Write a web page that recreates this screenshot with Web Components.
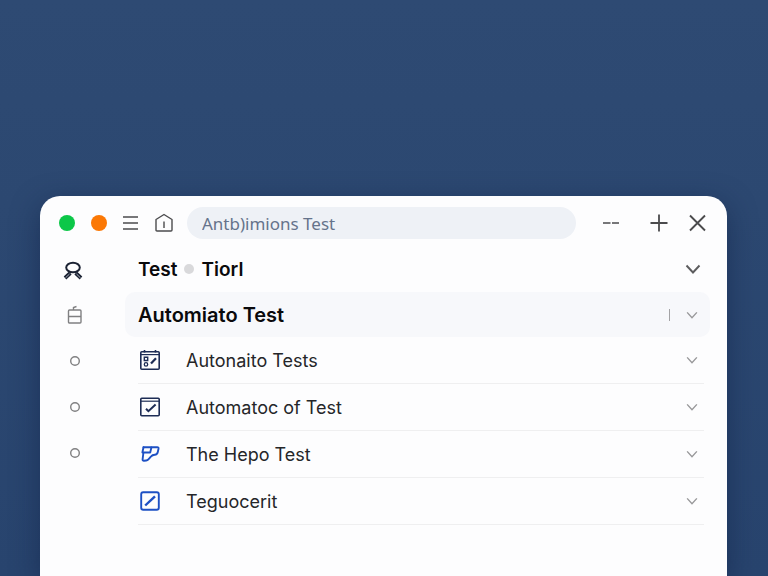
<!DOCTYPE html>
<html lang="en">
<head>
<meta charset="utf-8">
<meta name="viewport" content="width=device-width, initial-scale=1">
<title>Automiato Test</title>
<style>
  :root {
    --ink: #0a0a0c;
    --text: #252629;
    --grey: #808082;
    --dark-grey: #4b4b4d;
    --field: #eef1f6;
    --selected: #f7f8fb;
    --line: #efeff0;
    --navy: #1d2c55;
    --blue: #1d50c4;
  }

  body {
    margin: 0;
    min-height: 100vh;
    background: linear-gradient(#2e4a73, #2c4871 35%, #28446e);
    font-family: Inter, "Liberation Sans", sans-serif;
    color: var(--text);
    overflow: hidden;
  }
</style>
</head>
<body>
<app-window>
  <title-bar slot="bar" query="Antb)imions Test"></title-bar>
  <side-nav slot="nav"></side-nav>
  <section-head first="Test" second="Tiorl"></section-head>
  <group-row label="Automiato Test"></group-row>
  <test-row icon="list" label="Autonaito Tests"></test-row>
  <test-row icon="check" label="Automatoc of Test"></test-row>
  <test-row icon="flag" label="The Hepo Test"></test-row>
  <test-row icon="edit" label="Teguocerit"></test-row>
</app-window>

<script>
const base = `
  :host, * { box-sizing: border-box; margin: 0; padding: 0; }
  svg { display: block; fill: none; stroke: currentColor; }
  button { font: inherit; color: inherit; background: none; border: none; cursor: pointer; }
`;

const chevron = (size) => `
  <svg width="${size}" height="${size}" viewBox="0 0 16 16" stroke-width="1.9">
    <path d="M1.5 4.5 8 11.500l6.500-7"/>
  </svg>`;

const rowIcons = {
  list: `<g stroke="var(--navy)" stroke-width="1.6">
    <rect x="1.8" y="2.8" width="18.4" height="17.4" rx="1"/>
    <path d="M2 5.6h18" stroke-width="1.2"/>
    <path d="M5.5 1v2.5M16.5 1v2.5"/>
    <path d="M5.3 8.3h3.4v3.2H5.3z" stroke-width="1.4"/>
    <circle cx="7" cy="15.4" r="1.7" stroke-width="1.3"/>
    <path d="m12 14.6 5-5.4" stroke-width="2.2"/></g>`,
  check: `<g stroke="var(--navy)" stroke-width="1.6">
    <rect x="1.8" y="2.2" width="18.4" height="17.6" rx="1"/>
    <path d="M2 5.2h18" stroke-width="1.2"/>
    <path d="m7 12.8 2.4 2.4 7.200-6.700" stroke-width="2"/></g>`,
  flag: `<g stroke="var(--blue)" stroke-width="1.9" stroke-linejoin="round" stroke-linecap="round">
    <path d="M4.500 4.200h13.700q1.600 0 1.300 1.600l-.7 3.200q-.6 2.500-3 2.700-2.500.2-3.700 1.600l-2.700 3q-.9 1-2.200 1.200l-2.200.3q-1.600.1-1.400-1.500l.7-5.800"/>
    <path d="M4.500 4.200 3.400 9.500h7.800l1.200-5"/></g>`,
  edit: `<g stroke="var(--blue)" stroke-width="1.9">
    <rect x="2.2" y="2.2" width="17.6" height="17.6" rx="2"/>
    <path d="M6.200 15.500 16 6.300" stroke-width="2.4"/></g>`,
};

class AppWindow extends HTMLElement {
  constructor() {
    super();
    this.attachShadow({ mode: "open" });
    this.shadowRoot.innerHTML = `
      <style>
        ${base}
        :host { display: block; padding: 196px 41px 0 40px; }
        .window {
          min-height: calc(100vh - 196px);
          background: #fdfdfe;
          border-radius: 20px 20px 0 0;
          box-shadow: 0 8px 28px rgba(14, 30, 66, 0.5);
        }
        .body { display: grid; grid-template-columns: 85px minmax(0, 1fr); padding-right: 17px; }
      </style>
      <div class="window">
        <slot name="bar"></slot>
        <div class="body">
          <slot name="nav"></slot>
          <main><slot></slot></main>
        </div>
      </div>`;
  }
}

class TitleBar extends HTMLElement {
  constructor() {
    super();
    this.attachShadow({ mode: "open" });
    this.shadowRoot.innerHTML = `
      <style>
        ${base}
        :host {
          display: flex;
          align-items: center;
          height: 54px;
          padding: 0 20px 0 19px;
          color: var(--dark-grey);
        }
        .dot { width: 16px; height: 16px; margin-right: 16px; border-radius: 50%; }
        .green { background: #0cc748; }
        .orange { background: #fb7805; }
        .tool { margin-right: 14px; }
        input {
          flex: 1;
          min-width: 0;
          height: 32px;
          padding: 0 15px;
          border: none;
          border-radius: 16px;
          outline: none;
          background: var(--field);
          color: #65738b;
          font: 17px "Noto Sans", sans-serif;
        }
        .controls { display: flex; align-items: center; margin-left: 25px; }
        .max { margin: 0 18px 0 28px; }
      </style>
      <button class="dot green" aria-label="Run"></button>
      <button class="dot orange" aria-label="Pause"></button>
      <button class="tool" aria-label="Menu">
        <svg width="18" height="18" viewBox="0 0 18 18" stroke-width="1.4">
          <path d="M0 3h15M0 9h15M0 15h15"/>
        </svg>
      </button>
      <button class="tool" aria-label="Home">
        <svg width="18" height="20" viewBox="0 0 18 20" stroke-width="1.4" stroke-linejoin="round">
          <path d="M1 6.500 9 1.500l8 5V17q0 1-1 1H2q-1 0-1-1zM9 8.500V15"/>
        </svg>
      </button>
      <input type="text" aria-label="Search">
      <div class="controls">
        <button aria-label="Minimize">
          <svg width="20" height="20" viewBox="0 0 20 20" stroke-width="1.7">
            <path d="M2 10h7.500M11 10h7"/>
          </svg>
        </button>
        <button class="max" aria-label="Maximize">
          <svg width="20" height="20" viewBox="0 0 20 20" stroke-width="1.8">
            <path d="M1.500 10h17M10 1.500v17"/>
          </svg>
        </button>
        <button aria-label="Close">
          <svg width="20" height="20" viewBox="0 0 20 20" stroke-width="1.9">
            <path d="m3 2.500 15 15m0-15-15 15"/>
          </svg>
        </button>
      </div>`;
    this.shadowRoot.querySelector("input").value = this.getAttribute("query");
  }
}

class SideNav extends HTMLElement {
  constructor() {
    super();
    this.attachShadow({ mode: "open" });
    this.shadowRoot.innerHTML = `
      <style>
        ${base}
        :host { display: block; color: var(--grey); }
        nav { display: flex; flex-direction: column; }
        button { display: grid; place-items: center; width: 70px; height: 46px; }
        .top { height: 42px; padding-right: 4px; color: #1b2233; }
      </style>
      <nav>
        <button class="top" aria-label="Account">
          <svg width="22" height="22" viewBox="0 0 22 22" stroke-width="2">
            <ellipse cx="11" cy="7.500" rx="6.800" ry="4.800"/>
            <path d="M8.300 13 3 18M13.700 13l5.300 5" stroke-width="3.800"/>
            <path d="M7.500 14 3.500 17.800M14.500 14l4 3.800" stroke="#aab0bd" stroke-width="1"/>
          </svg>
        </button>
        <button aria-label="Storage">
          <svg width="20" height="20" viewBox="0 0 20 20" stroke-width="1.4">
            <rect x="3.500" y="5" width="12.500" height="13" rx="1"/>
            <path d="M3.500 11.500H16M8.500 5V2.500l3-1"/>
          </svg>
        </button>
        ${["One", "Two", "Three"].map((name) => `
        <button aria-label="${name}">
          <svg width="12" height="12" viewBox="0 0 12 12" stroke-width="1.4"><circle cx="6" cy="6" r="4.300"/></svg>
        </button>`).join("")}
      </nav>`;
  }
}

class SectionHead extends HTMLElement {
  constructor() {
    super();
    this.attachShadow({ mode: "open" });
    this.shadowRoot.innerHTML = `
      <style>
        ${base}
        :host {
          display: flex;
          align-items: center;
          height: 42px;
          padding: 0 9px 4px 13px;
          color: var(--ink);
        }
        h1 { display: flex; align-items: center; gap: 7px; flex: 1; font-size: 19px; font-weight: 600; }
        i { width: 10px; height: 10px; border-radius: 50%; background: #d9d9db; }
        button { color: #5c5c5e; }
      </style>
      <h1><span class="first"></span><i></i><span class="second"></span></h1>
      <button aria-label="Collapse">${chevron(16)}</button>`;
    this.shadowRoot.querySelector(".first").textContent = this.getAttribute("first");
    this.shadowRoot.querySelector(".second").textContent = this.getAttribute("second");
  }
}

class GroupRow extends HTMLElement {
  constructor() {
    super();
    this.attachShadow({ mode: "open" });
    this.shadowRoot.innerHTML = `
      <style>
        ${base}
        :host {
          display: flex;
          align-items: center;
          height: 45px;
          padding: 0 12px 0 13px;
          border-radius: 10px;
          background: var(--selected);
          color: var(--ink);
        }
        h2 { flex: 1; font-size: 20px; font-weight: 600; }
        hr { width: 1px; height: 12px; margin-right: 16px; border: none; background: #a3a3a5; }
        button { color: #98989a; }
      </style>
      <h2></h2>
      <hr>
      <button aria-label="Expand">${chevron(12)}</button>`;
    this.shadowRoot.querySelector("h2").textContent = this.getAttribute("label");
  }
}

class TestRow extends HTMLElement {
  constructor() {
    super();
    this.attachShadow({ mode: "open" });
    this.shadowRoot.innerHTML = `
      <style>
        ${base}
        :host {
          display: flex;
          align-items: center;
          gap: 24px;
          height: 47px;
          margin: 0 6px 0 13px;
          padding-right: 6px;
          border-bottom: 1px solid var(--line);
        }
        p { flex: 1; font-size: 18px; }
        button { color: #98989a; }
      </style>
      <svg width="24" height="22" viewBox="-1 0 24 22">${rowIcons[this.getAttribute("icon")]}</svg>
      <p></p>
      <button aria-label="Expand">${chevron(12)}</button>`;
    this.shadowRoot.querySelector("p").textContent = this.getAttribute("label");
  }
}

window.customElements.define("app-window", AppWindow);
window.customElements.define("title-bar", TitleBar);
window.customElements.define("side-nav", SideNav);
window.customElements.define("section-head", SectionHead);
window.customElements.define("group-row", GroupRow);
window.customElements.define("test-row", TestRow);
</script>
</body>
</html>
